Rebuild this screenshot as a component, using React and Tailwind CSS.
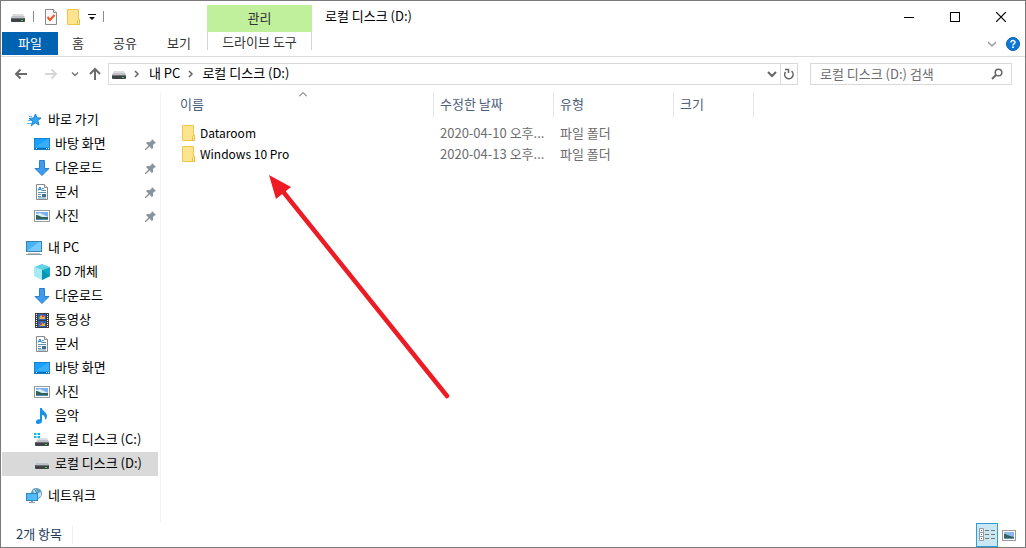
import { useState } from "react";

function DriveIcon({ system }) {
  return (
    <svg width="16" height="16" viewBox="0 0 16 16" aria-hidden="true">
      {system && (
        <path d="M0 1h2.500v2H0zM3.500 1H6v2H3.500zM0 4h2.500v2H0zM3.500 4H6v2H3.500z" fill="#12b5ea" />
      )}
      <path d={system ? "M4 6h9l2 4H2z" : "M3 5h10l2 4H1z"} fill="#dadcde" />
      <path d={system ? "M4 8h10l1 2H2z" : "M2 7h12l1 2H1z"} fill="#bfc2c5" />
      <rect x="1" y={system ? 10 : 9} width="14" height="4" rx="1" fill="#3f4347" />
      <rect x="2" y={system ? 10 : 9} width="12" height="1" fill="#6c7075" />
      <rect x="11" y={system ? 12 : 11} width="2" height="1" fill="#3fe04a" />
    </svg>
  );
}

function FolderIcon() {
  return (
    <svg width="16" height="16" viewBox="0 0 16 16" aria-hidden="true">
      <path d="M1.500 .5h11v10h1v5h-12z" fill="#ffe48f" stroke="#eec64a" />
      <path d="M11.500 15.500v-4l1-1h1v5z" fill="#fff0b8" stroke="#e8bd3c" />
    </svg>
  );
}

function PropertiesIcon() {
  return (
    <svg width="16" height="16" viewBox="0 0 16 16" aria-hidden="true">
      <path d="M2.500 .5h8l3 3v12h-11z" fill="#f8f8fa" stroke="#8a8a8a" />
      <path d="M10.500 .5v3h3" fill="#fff" stroke="#8a8a8a" />
      <path d="M4.500 8l2.500 3 4.500-5" fill="none" stroke="#f0561d" strokeWidth="2" />
    </svg>
  );
}

function StarIcon() {
  return (
    <svg width="16" height="16" viewBox="0 0 16 16" aria-hidden="true">
      <path
        d="M9.500 2l1.300 3.800 4.200.2-3.200 2.600 1.200 4.400-3.800-2.200-4 3 1.500-4.600L3 6.500l4.500-.5z"
        fill="#2fa8f0"
        stroke="#1a86d0"
      />
      <path d="M3 4.500h3M2 8.500h3M1 11.500h4" stroke="#5bb8ee" />
    </svg>
  );
}

function DesktopIcon() {
  return (
    <svg width="16" height="16" viewBox="0 0 16 16" aria-hidden="true">
      <rect x=".5" y="2.500" width="15" height="11" fill="#1aa0f8" stroke="#1583cf" />
      <path d="M1 11L14 3h1v8z" fill="#4bb8ff" opacity=".6" />
      <path d="M1 12h14v1.500H1z" fill="#0a6fbd" />
      <path d="M2 12.500h1M12 12.500h1M14 12.500h1" stroke="#fff" />
    </svg>
  );
}

function DownloadIcon() {
  return (
    <svg width="16" height="16" viewBox="0 0 16 16" aria-hidden="true">
      <path d="M5.500 .5h5v8h4.500L8 15.500 1 8.500h4.500z" fill="#3f9bec" stroke="#2b7fd0" />
    </svg>
  );
}

function DocumentIcon() {
  return (
    <svg width="16" height="16" viewBox="0 0 16 16" aria-hidden="true">
      <path d="M2.500 .5h8l3 3v12h-11z" fill="#fff" stroke="#8a8a8a" />
      <path d="M10.500 .5v3h3" fill="#eee" stroke="#8a8a8a" />
      <path d="M4 6.500l2-3.500 1.500 3.500M5 5.500h2" fill="none" stroke="#1c86d8" />
      <path d="M8 4.500h2M8 6.500h4M4 8.500h8M4 10.500h3M4 12.500h3M4 14h8" stroke="#5b93b8" />
      <rect x="8" y="10" width="4" height="3" fill="#3f6f94" />
    </svg>
  );
}

function PictureIcon() {
  return (
    <svg width="16" height="16" viewBox="0 0 16 16" aria-hidden="true">
      <rect x=".5" y="2.500" width="15" height="11" fill="#fff" stroke="#9a9a9a" />
      <rect x="2" y="4" width="12" height="8" fill="#79b0ee" />
      <path d="M2 6l4-1 8 4v3H2z" fill="#d9ecf5" />
      <path d="M2 7c3 0 4 2 7 2h5v2H2z" fill="#35605c" />
      <path d="M2 11h12v1H2z" fill="#4f8aa8" />
    </svg>
  );
}

function ComputerIcon() {
  return (
    <svg width="16" height="16" viewBox="0 0 16 16" aria-hidden="true">
      <rect x=".5" y="1.500" width="15" height="10" fill="#48b4f8" stroke="#3d83ad" />
      <path d="M1 11L13 2h2v9z" fill="#8bd3ff" opacity=".7" />
      <path d="M2 13.500h12" stroke="#b9c4cb" />
      <path d="M0 14.500h16" stroke="#8d9ba5" />
    </svg>
  );
}

function CubeIcon() {
  return (
    <svg width="16" height="16" viewBox="0 0 16 16" aria-hidden="true">
      <path d="M8 0l8 3-8 3-8-3z" fill="#5fd3e3" />
      <path d="M0 3l8 3v10l-8-4z" fill="#a5ecf2" />
      <path d="M16 3L8 6v10l8-4z" fill="#12a9c4" />
      <path d="M8 6v10l8-4z" fill="#0796b4" />
    </svg>
  );
}

function VideoIcon() {
  return (
    <svg width="16" height="16" viewBox="0 0 16 16" aria-hidden="true">
      <rect x="1" y="1" width="14" height="15" fill="#3c3c3c" />
      <path d="M2.500 2v13M13.500 2v13" stroke="#fff" strokeDasharray="1 1" />
      <rect x="4" y="2" width="8" height="6" fill="#2d62c4" />
      <rect x="4" y="9" width="8" height="6" fill="#2d62c4" />
      <path d="M5 6l2-3 2 2 2-1v3H6zM5 13l3-3 1 2 2-1v3H7z" fill="#e6b13c" />
      <path d="M8 3h2v2H8zM6 11h2v2H6z" fill="#cf4433" />
    </svg>
  );
}

function MusicIcon() {
  return (
    <svg width="16" height="16" viewBox="0 0 16 16" aria-hidden="true">
      <path
        d="M6 0h2c0 3 5 4 5 8 0 2-1 3-2 4 .5-3-1-5-3-5v6c0 2-2 3-4 3s-2-1-2-2c0-2 2-3 4-2.500z"
        fill="#1593ec"
      />
    </svg>
  );
}

function NetworkIcon() {
  return (
    <svg width="16" height="16" viewBox="0 0 16 16" aria-hidden="true">
      <circle cx="10.500" cy="5.500" r="5.500" fill="#5a9fc4" />
      <path d="M7 2l3-1 1 3-3 2zM12 5l3-1v4l-3 2z" fill="#c0e0ee" />
      <path d="M8 0.500c3 3 3 7 2 10" fill="none" stroke="#3b7da6" />
      <rect x=".5" y="5.500" width="11" height="7" fill="#52b9fb" stroke="#2b86c4" />
      <path d="M5 13h2v1h2v1H3v-1h2z" fill="#8aa0ae" />
    </svg>
  );
}

function PinIcon() {
  return (
    <svg width="11" height="11" viewBox="0 0 11 11" aria-hidden="true">
      <path d="M7 0l4 4-1.500.5L8 6v3L7 10 4.500 7.500 1 11H0v-1l3.500-3.500L1 4l1-1h3l1.500-1.500z" fill="#88949e" />
    </svg>
  );
}

function Chevron({ className = "", d = "M1 2.500l3 3 3-3", width = 1 }) {
  return (
    <svg className={className} width="8" height="8" viewBox="0 0 8 8" aria-hidden="true">
      <path d={d} fill="none" stroke="currentColor" strokeWidth={width} />
    </svg>
  );
}

const groups = [
  {
    label: "바로 가기",
    icon: <StarIcon />,
    items: [
      { id: "q-desktop", label: "바탕 화면", icon: <DesktopIcon />, pinned: true },
      { id: "q-download", label: "다운로드", icon: <DownloadIcon />, pinned: true },
      { id: "q-docs", label: "문서", icon: <DocumentIcon />, pinned: true },
      { id: "q-pics", label: "사진", icon: <PictureIcon />, pinned: true },
    ],
  },
  {
    label: "내 PC",
    icon: <ComputerIcon />,
    items: [
      { id: "3d", label: "3D 개체", icon: <CubeIcon /> },
      { id: "download", label: "다운로드", icon: <DownloadIcon /> },
      { id: "video", label: "동영상", icon: <VideoIcon /> },
      { id: "docs", label: "문서", icon: <DocumentIcon /> },
      { id: "desktop", label: "바탕 화면", icon: <DesktopIcon /> },
      { id: "pics", label: "사진", icon: <PictureIcon /> },
      { id: "music", label: "음악", icon: <MusicIcon /> },
      { id: "c", label: "로컬 디스크 (C:)", icon: <DriveIcon system /> },
      { id: "d", label: "로컬 디스크 (D:)", icon: <DriveIcon /> },
    ],
  },
  { label: "네트워크", icon: <NetworkIcon />, items: [] },
];

const files = [
  { name: "Dataroom", date: "2020-04-10 오후...", type: "파일 폴더" },
  { name: "Windows 10 Pro", date: "2020-04-13 오후...", type: "파일 폴더" },
];

function Header() {
  return (
    <header className="flex border-b border-[#dadbdc] px-px">
      <div className="w-[205px]">
        <div className="flex h-[31px] items-center pl-2">
          <DriveIcon />
          <span className="ml-[7px] h-[11px] w-px bg-[#8c8c8c]" />
          <button className="ml-[9px]" aria-label="속성">
            <PropertiesIcon />
          </button>
          <button className="ml-[7px]" aria-label="새 폴더">
            <FolderIcon />
          </button>
          <button className="ml-1.5" aria-label="빠른 실행 도구 모음 사용자 지정">
            <svg width="8" height="8" viewBox="0 0 8 8">
              <path d="M0 1h8v1H0zM1 4h6L4 7z" fill="#111" />
            </svg>
          </button>
          <span className="ml-[7px] h-[11px] w-px bg-[#8c8c8c]" />
        </div>
        <div className="flex h-6 text-[#333]">
          <button className="h-[23px] w-14 bg-[#0063b1] pb-0.5 text-white">파일</button>
          <button className="h-[23px] w-10 pb-0.5">홈</button>
          <button className="h-[23px] w-[54px] pb-0.5">공유</button>
          <button className="h-[23px] w-[54px] pb-0.5">보기</button>
        </div>
      </div>

      <div className="w-[105px] pt-1 text-[#333]">
        <div className="flex h-[27px] items-center justify-center bg-[#c1f09c] pb-0.5">관리</div>
        <button className="h-[18px] w-full border-x border-[#d4d4d4] pt-0.5 whitespace-nowrap">
          드라이브 도구
        </button>
      </div>

      <div className="flex-1">
        <div className="flex h-[31px] items-center">
          <h1 className="flex-1 pb-0.5 pl-[13px]">로컬 디스크 (D:)</h1>
          <button className="flex h-full w-[46px] items-center justify-center" aria-label="최소화">
            <svg width="10" height="10" viewBox="0 0 10 10">
              <path d="M0 5.500h10" stroke="#000" />
            </svg>
          </button>
          <button className="flex h-full w-[46px] items-center justify-center" aria-label="최대화">
            <svg width="10" height="10" viewBox="0 0 10 10">
              <rect x=".5" y=".5" width="9" height="9" fill="none" stroke="#000" />
            </svg>
          </button>
          <button className="flex h-full w-[46px] items-center justify-center" aria-label="닫기">
            <svg width="10" height="10" viewBox="0 0 10 10">
              <path d="M0 0l10 10M10 0L0 10" stroke="#000" strokeWidth="1.200" />
            </svg>
          </button>
        </div>
        <div className="flex h-6 items-center justify-end gap-2.5 pr-1">
          <button className="text-[#999]" aria-label="리본 확장">
            <Chevron d="M0 2l4 4 4-4" width={1.5} />
          </button>
          <button aria-label="도움말">
            <svg width="14" height="14" viewBox="0 0 14 14">
              <circle cx="7" cy="7" r="6.500" fill="#0b78d7" stroke="#0860ad" />
              <path d="M5 5.500C5 3 9 3 9 5.300 9 7 7 6.800 7 8.500" fill="none" stroke="#fff" strokeWidth="1.500" />
              <rect x="6" y="9.500" width="2" height="1.500" fill="#fff" />
            </svg>
          </button>
        </div>
      </div>
    </header>
  );
}

function AddressBar() {
  return (
    <div className="flex h-[35px] items-center pr-[13px] pb-px pl-3">
      <button className="text-[#6b6b6b]" aria-label="뒤로">
        <svg width="16" height="16" viewBox="0 0 16 16">
          <path d="M14 8H3M7.500 3.500L3 8l4.500 4.500" fill="none" stroke="currentColor" strokeWidth="2" />
        </svg>
      </button>
      <button className="ml-3.5 text-[#d6d6d6]" aria-label="앞으로">
        <svg width="16" height="16" viewBox="0 0 16 16">
          <path d="M2 8h11M8.500 3.500L13 8l-4.500 4.500" fill="none" stroke="currentColor" strokeWidth="2" />
        </svg>
      </button>
      <button className="ml-3 text-[#777]" aria-label="최근 위치">
        <Chevron width={1.5} />
      </button>
      <button className="ml-2 text-[#6b6b6b]" aria-label="위로">
        <svg width="16" height="16" viewBox="0 0 16 16">
          <path d="M8 14V3M3 8l5-5 5 5" fill="none" stroke="currentColor" strokeWidth="2" />
        </svg>
      </button>

      <div className="ml-[5px] flex h-[22px] flex-1 items-center border border-[#d9d9d9] pl-0.5">
        <DriveIcon />
        <Chevron className="ml-1.5 text-[#666]" d="M2 1l3 3-3 3" width={1.5} />
        <button className="ml-2 pb-0.5">내 PC</button>
        <Chevron className="ml-[7px] text-[#666]" d="M2 1l3 3-3 3" width={1.5} />
        <button className="ml-[7px] pb-0.5">로컬 디스크 (D:)</button>
        <button className="mr-[3px] ml-auto text-[#666]" aria-label="이전 위치">
          <svg width="10" height="10" viewBox="0 0 10 10">
            <path d="M1 3l4 4 4-4" fill="none" stroke="currentColor" strokeWidth="2" />
          </svg>
        </button>
        <button
          className="flex h-full w-[17px] items-center justify-center border-l border-[#d9d9d9] text-[#666]"
          aria-label="새로 고침"
        >
          <svg width="12" height="12" viewBox="0 0 12 12">
            <path d="M2.500 4A4.200 4.200 0 1 0 8.500 3.200" fill="none" stroke="currentColor" strokeWidth="1.600" />
            <path d="M2 1.500h3.500V5" fill="none" stroke="currentColor" strokeWidth="1.500" />
          </svg>
        </button>
      </div>

      <div className="ml-3 flex h-[22px] w-[202px] items-center border border-[#d9d9d9] pr-2 pl-[9px]">
        <input
          type="text"
          aria-label="로컬 디스크 (D:) 검색"
          placeholder="로컬 디스크 (D:) 검색"
          className="h-5 min-w-0 flex-1 pb-0.5 outline-none placeholder:text-[#6d6d6d]"
        />
        <svg width="12" height="12" viewBox="0 0 12 12" aria-hidden="true">
          <circle cx="7.500" cy="4.500" r="3.300" fill="none" stroke="#666" strokeWidth="1.500" />
          <path d="M5 7L1 11" stroke="#666" strokeWidth="2" />
        </svg>
      </div>
    </div>
  );
}

function Sidebar() {
  const [selected, setSelected] = useState("d");

  return (
    <nav className="w-40 shrink-0 space-y-2 border-r border-[#f3f3f3] pt-4 pr-0.5 pl-px">
      {groups.map((group) => (
        <div key={group.label}>
          <button className="flex h-6 w-full items-center gap-1.5 pl-6">
            {group.icon}
            <span className="pb-0.5">{group.label}</span>
          </button>
          {group.items.map((item) => (
            <button
              key={item.id}
              onClick={() => setSelected(item.id)}
              className={`flex h-6 w-full items-center gap-[5px] pr-0.5 pl-8 whitespace-nowrap ${
                selected === item.id ? "bg-[#d9d9d9]" : ""
              }`}
            >
              {item.icon}
              <span className="pb-0.5">{item.label}</span>
              {item.pinned && (
                <span className="ml-auto">
                  <PinIcon />
                </span>
              )}
            </button>
          ))}
        </div>
      ))}
    </nav>
  );
}

function FileList() {
  return (
    <main className="relative flex-1">
      <table className="w-[593px] table-fixed border-separate border-spacing-0 text-left">
        <thead className="text-[#4c607a]">
          <tr className="h-[25px]">
            <th className="relative w-[273px] border-r border-[#e5e5e5] p-0 pb-0.5 pl-[19px] font-normal">
              이름
              <svg className="absolute top-0 left-[138px]" width="8" height="5" viewBox="0 0 8 5">
                <path d="M0 4.500l4-4 4 4" fill="none" stroke="#555" />
              </svg>
            </th>
            <th className="w-[120px] border-r border-[#e5e5e5] p-0 pb-0.5 pl-1.5 font-normal">수정한 날짜</th>
            <th className="w-[120px] border-r border-[#e5e5e5] p-0 pb-0.5 pl-1.5 font-normal">유형</th>
            <th className="w-20 border-r border-[#e5e5e5] p-0 pb-0.5 pl-1.5 font-normal">크기</th>
          </tr>
        </thead>
        <tbody className="text-[#6d6d6d]">
          <tr className="h-[5px]">
            <td colSpan={4} className="p-0" />
          </tr>
          {files.map((file) => (
            <tr key={file.name} className="h-[21px]">
              <td className="p-0 pl-5 text-xs text-black">
                <div className="flex items-center gap-[3px]">
                  <FolderIcon />
                  {file.name}
                </div>
              </td>
              <td className="p-0 pl-1.5 whitespace-nowrap">{file.date}</td>
              <td className="p-0 pl-1.5">{file.type}</td>
              <td className="p-0" />
            </tr>
          ))}
        </tbody>
      </table>

      {/* pointer to the folder */}
      <svg
        className="pointer-events-none absolute top-[83px] left-[108px]"
        width="182"
        height="226"
        viewBox="0 0 182 226"
        aria-hidden="true"
      >
        <path d="M12 14L178 221" stroke="#ed1c24" strokeWidth="4.500" strokeLinecap="round" />
        <path d="M0 0l22 12-15 12z" fill="#ed1c24" />
      </svg>
    </main>
  );
}

function StatusBar() {
  return (
    <footer className="flex h-6 items-center pl-[15px] text-[#1e395b]">
      <span className="border-r border-[#f0f0f0] pr-2.5 pb-0.5">2개 항목</span>
      <button
        className="ml-auto flex h-6 w-[22px] items-center justify-center border border-[#2a9fd8] bg-[#cbe7f4]"
        aria-label="자세히"
      >
        <svg width="16" height="14" viewBox="0 0 16 14">
          <path d="M.5 .5h4v4h-4zM.5 4.500h4v4h-4zM.5 8.500h4v4h-4z" fill="#fff" stroke="#999" />
          <path d="M2 2h1v1H2z" fill="#444" />
          <path d="M2 6h1v1H2z" fill="#2a7be0" />
          <path d="M2 10h1v1H2z" fill="#e02020" />
          <path d="M6 2.500h4M12 2.500h4M6 6.500h4M12 6.500h4M6 10.500h4M12 10.500h4" stroke="#777" />
        </svg>
      </button>
      <button className="mr-[9px] ml-1" aria-label="큰 아이콘">
        <svg width="14" height="11" viewBox="0 0 14 11">
          <rect x=".5" y=".5" width="13" height="10" fill="#fff" stroke="#999" />
          <rect x="2" y="2" width="10" height="7" fill="#8ab8f0" />
          <path d="M2 4c3 0 4 2 10 3v1H2z" fill="#35605c" />
          <path d="M2 8h10v1H2z" fill="#5e94b0" />
        </svg>
      </button>
    </footer>
  );
}

export default function App() {
  return (
    <div className="flex min-h-screen flex-col border border-[#7a7a7a] bg-white font-['Noto_Sans_CJK_KR',sans-serif] text-[13px] leading-4 text-black">
      <Header />
      <AddressBar />
      <div className="flex flex-1">
        <Sidebar />
        <FileList />
      </div>
      <StatusBar />
    </div>
  );
}
